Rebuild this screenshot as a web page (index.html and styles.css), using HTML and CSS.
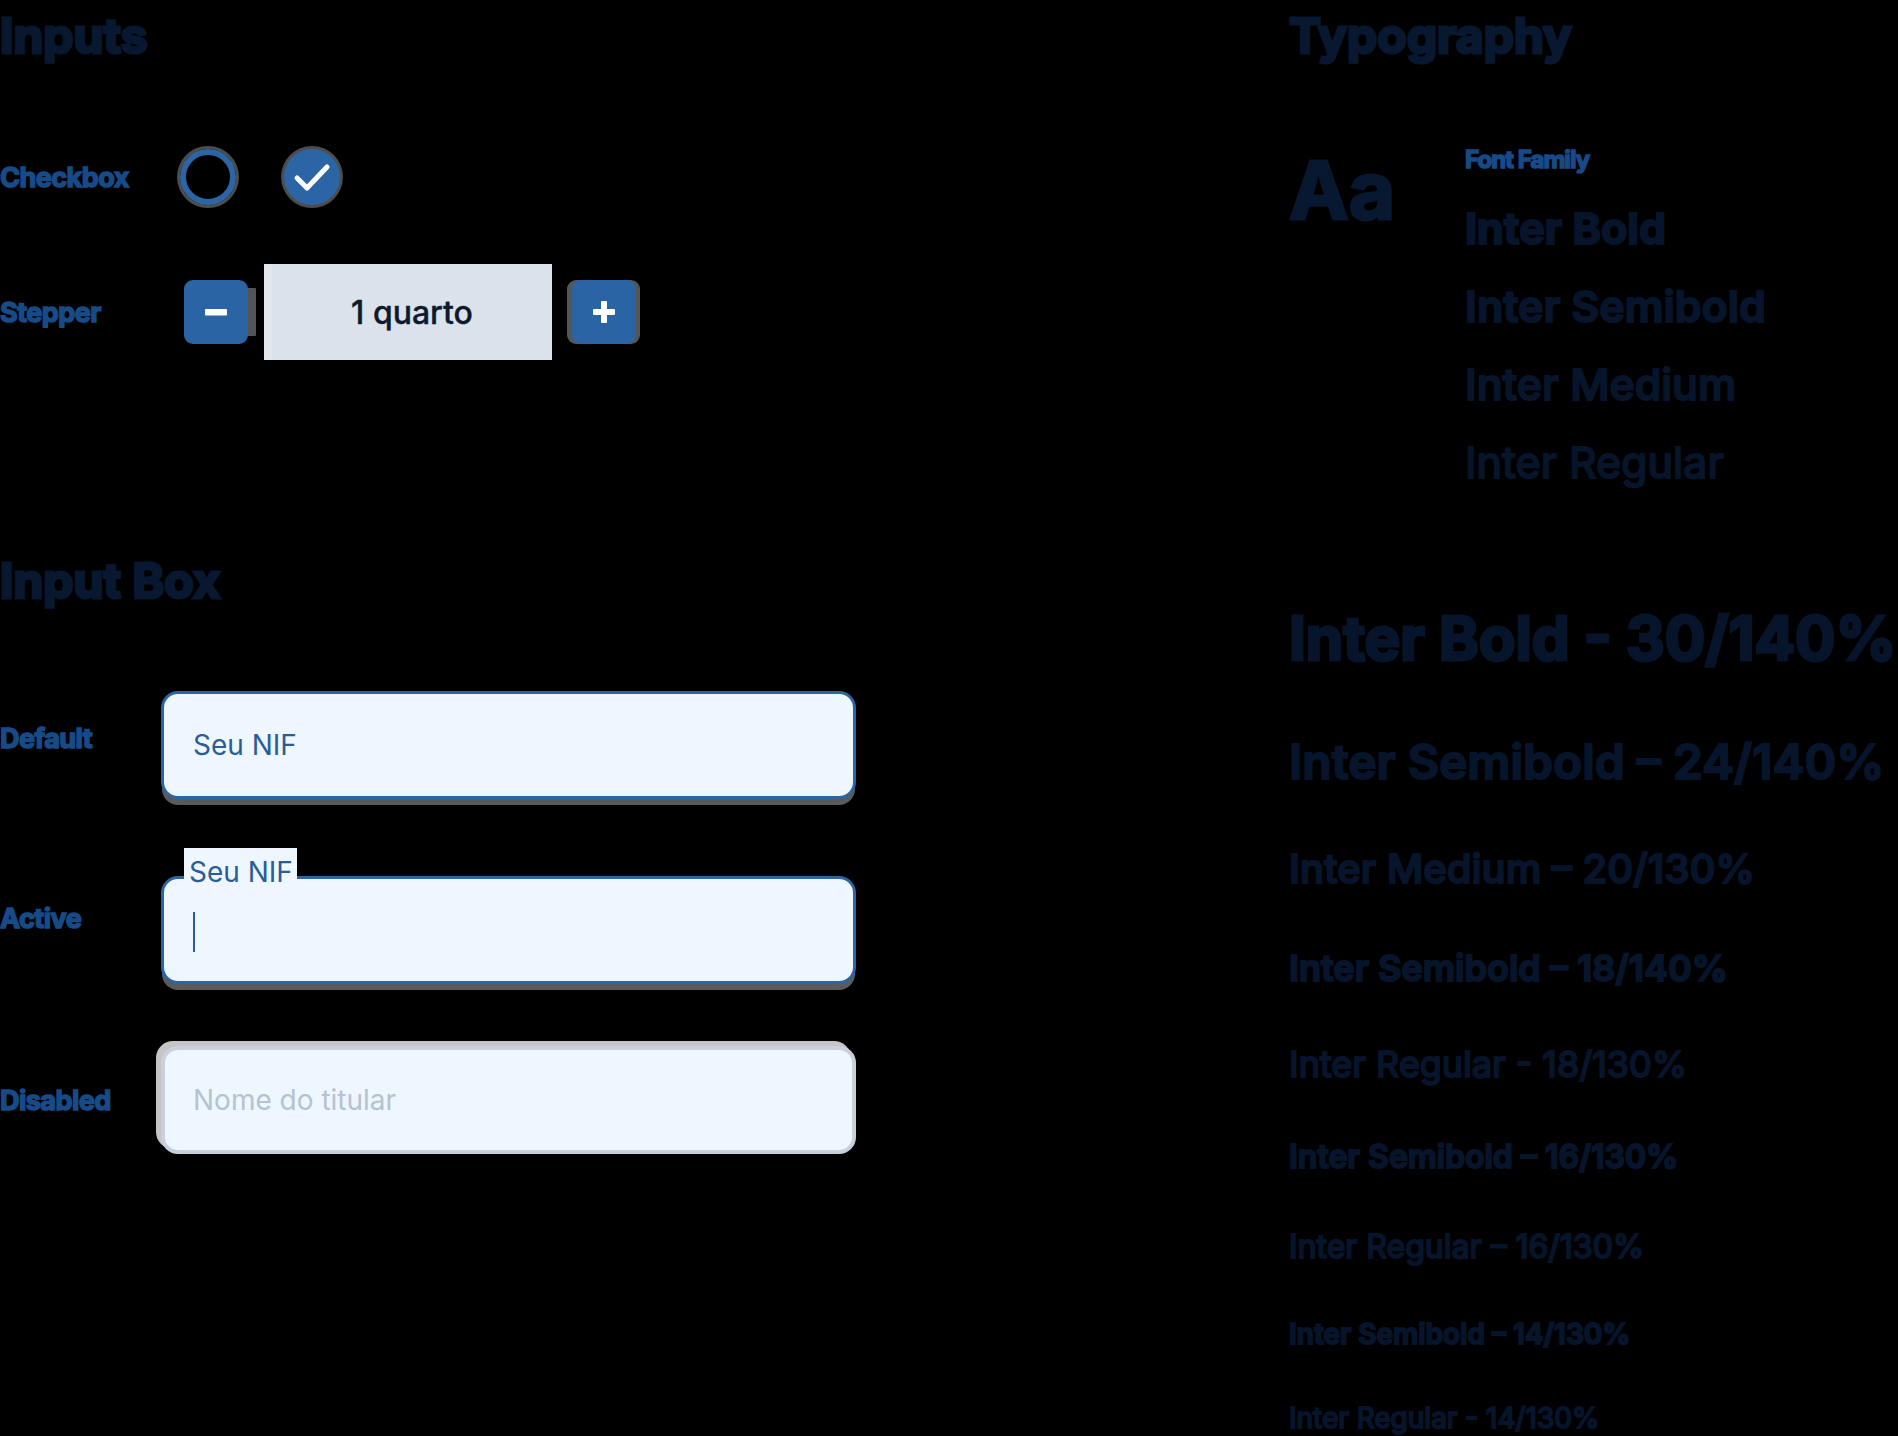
FILE: index.html
```html
<!DOCTYPE html>
<html lang="pt">
<head>
<meta charset="utf-8">
<title>Inputs &amp; Typography</title>
<link rel="stylesheet" href="styles.css">
</head>
<body>
<main class="page">
  <section class="col col-left">
    <h2 class="heading">Inputs</h2>

    <div class="row row-check">
      <span class="label">Checkbox</span>
      <div class="checks">
        <span class="check"></span>
        <span class="check check-on">
          <svg viewBox="0 0 56 56" width="56" height="56" aria-hidden="true"><polyline points="13,29 23,39 43,18" fill="none" stroke="#fff" stroke-width="5" stroke-linecap="round" stroke-linejoin="round"/></svg>
        </span>
      </div>
    </div>

    <div class="row row-stepper">
      <span class="label">Stepper</span>
      <div class="stepper">
        <button class="step-btn step-minus" type="button" aria-label="Diminuir">
          <svg viewBox="0 0 22 22" width="22" height="22" aria-hidden="true"><rect x="0" y="8" width="22" height="6.5" rx="1" fill="#fff"/></svg>
        </button>
        <div class="step-value">1 quarto</div>
        <button class="step-btn step-plus" type="button" aria-label="Aumentar">
          <svg viewBox="0 0 22 22" width="22" height="22" aria-hidden="true"><rect x="0" y="8" width="22" height="6" rx="1" fill="#fff"/><rect x="8" y="0" width="6" height="22" rx="1" fill="#fff"/></svg>
        </button>
      </div>
    </div>

    <h2 class="heading heading-box">Input Box</h2>

    <div class="row row-field row-default">
      <span class="label label-up">Default</span>
      <div class="field">
        <span class="field-text">Seu NIF</span>
      </div>
    </div>

    <div class="row row-field row-active">
      <span class="label label-up2">Active</span>
      <div class="field field-active">
        <span class="float-label">Seu NIF</span>
        <span class="caret"></span>
      </div>
    </div>

    <div class="row row-field row-disabled">
      <span class="label">Disabled</span>
      <div class="field field-disabled">
        <span class="field-text placeholder">Nome do titular</span>
      </div>
    </div>
  </section>

  <section class="col col-right">
    <h2 class="heading">Typography</h2>

    <div class="family">
      <div class="aa">Aa</div>
      <ul class="family-list">
        <li class="family-title">Font Family</li>
        <li class="fam w700">Inter Bold</li>
        <li class="fam w600">Inter Semibold</li>
        <li class="fam w500">Inter Medium</li>
        <li class="fam w400">Inter Regular</li>
      </ul>
    </div>

    <ul class="samples">
      <li class="s s1">Inter Bold - 30/140%</li>
      <li class="s s2">Inter Semibold – 24/140%</li>
      <li class="s s3">Inter Medium – 20/130%</li>
      <li class="s s4">Inter Semibold – 18/140%</li>
      <li class="s s5">Inter Regular - 18/130%</li>
      <li class="s s6">Inter Semibold – 16/130%</li>
      <li class="s s7">Inter Regular – 16/130%</li>
      <li class="s s8">Inter Semibold – 14/130%</li>
      <li class="s s9">Inter Regular - 14/130%</li>
    </ul>
  </section>
</main>
</body>
</html>
```

FILE: styles.css
```css
html, body {
  margin: 0;
  padding: 0;
  background: #000;
}

body {
  font-family: Inter, "Noto Sans", "Liberation Sans", sans-serif;
  color: #06152c;
}

.page {
  display: flex;
  align-items: flex-start;
  width: 1898px;
}

.col-left {
  width: 1289px;
  flex: none;
  display: flex;
  flex-direction: column;
}

.col-right {
  flex: 1;
  display: flex;
  flex-direction: column;
}

.heading {
  margin: 0;
  font-size: 48px;
  font-weight: 700;
  line-height: 72px;
  color: #071830;
  -webkit-text-stroke: 3px #071830;
  letter-spacing: 0;
}

/* ---------- rows ---------- */
.row {
  display: grid;
  grid-template-columns: 161px 1fr;
  align-items: center;
}

.label {
  justify-self: start;
  font-size: 27px;
  font-weight: 700;
  line-height: 1;
  color: #164b88;
  -webkit-text-stroke: 1.5px #164b88;
  letter-spacing: -0.02em;
}

.label-up { transform: translateY(-7px); }
.label-up2 { transform: translateY(-12px); }

.row-check { margin-top: 77px; height: 56px; }
.row-stepper { margin-top: 59px; height: 96px; }
.heading-box { margin-top: 185px; }
.row-default { margin-top: 74px; }
.row-active { margin-top: 77px; }
.row-disabled { margin-top: 62px; }

/* ---------- checkbox ---------- */
.checks {
  display: flex;
  gap: 48px;
  padding-left: 19px;
}

.check {
  box-sizing: border-box;
  width: 56px;
  height: 56px;
  border-radius: 50%;
  border: 6px solid #2b65a5;
  box-shadow: 0 0 0 3px #4d4d4d;
  display: flex;
}

.check-on {
  border: none;
  background: #2b65a5;
}

/* ---------- stepper ---------- */
.stepper {
  display: flex;
  align-items: center;
  padding-left: 23px;
}

.step-btn {
  width: 64px;
  height: 64px;
  padding: 0;
  border: none;
  border-radius: 9px;
  background: #2b64a4;
  display: flex;
  align-items: center;
  justify-content: center;
}

.step-minus {
  box-shadow: 16px 0 0 -8px #555;
}

.step-plus {
  margin-left: 20px;
  box-shadow: -5px 0 0 #555, 4px 0 0 #555;
}

.step-value {
  margin-left: 24px;
  width: 280px;
  height: 96px;
  background: #dbe2ec;
  box-shadow: -8px 0 0 0 #e2e7ee;
  display: flex;
  align-items: center;
  justify-content: center;
  font-size: 32px;
  font-weight: 500;
  color: #0c1a2c;
  -webkit-text-stroke: 0.4px #0c1a2c;
}

/* ---------- input box ---------- */
.field {
  position: relative;
  box-sizing: border-box;
  width: 695px;
  height: 108px;
  border: 3px solid #2b65a4;
  border-radius: 17px;
  background: #eef7ff;
  box-shadow: 0 7px 0 -1px #5a5a5a;
  display: flex;
  align-items: center;
  padding-left: 29px;
}

.field-text {
  font-size: 28px;
  font-weight: 400;
  color: #2a5d97;
}

.float-label {
  position: absolute;
  left: 20px;
  top: -31px;
  padding: 6px 4px 0 5px;
  background: #eef7ff;
  font-size: 28px;
  line-height: 36px;
  color: #2a5d97;
}

.caret {
  width: 2px;
  height: 40px;
  background: #2a5d97;
  margin-top: 4px;
}

.field-disabled {
  border: 4px solid #c7d0dc;
  box-shadow: -5px -5px 0 0 #c5c5c5;
  padding-left: 28px;
}

.placeholder {
  color: #b5c2d2;
}

/* ---------- typography ---------- */
.family {
  display: flex;
  margin-top: 70px;
}

.aa {
  width: 176px;
  flex: none;
  font-size: 80px;
  font-weight: 700;
  line-height: 96px;
  color: #071830;
  -webkit-text-stroke: 3px #071830;
}

.family-list {
  list-style: none;
  margin: 0;
  padding: 0;
  display: flex;
  flex-direction: column;
  gap: 20px;
}

.family-title {
  font-size: 24px;
  font-weight: 700;
  line-height: 34px;
  color: #164b88;
  -webkit-text-stroke: 1.5px #164b88;
  letter-spacing: -0.04em;
  margin-top: 1px;
  margin-bottom: 2px;
}

.fam {
  font-size: 43px;
  line-height: 58px;
  color: #06152c;
  -webkit-text-stroke: 2px #06152c;
}

.w700 { font-weight: 700; }
.w600 { font-weight: 600; }
.w500 { font-weight: 500; }
.w400 { font-weight: 400; }

.samples {
  list-style: none;
  margin: 105px 0 0;
  padding: 0;
  display: flex;
  flex-direction: column;
  gap: 48px;
}

.s {
  color: #06152c;
  -webkit-text-stroke: 2px #06152c;
  white-space: nowrap;
}

.s1 { font-size: 60px; font-weight: 700; line-height: 84px; -webkit-text-stroke-width: 3px; }
.s2 { font-size: 48px; font-weight: 600; line-height: 67px; }
.s3 { font-size: 40px; font-weight: 500; line-height: 52px; }
.s4 { font-size: 36px; font-weight: 600; line-height: 50px; }
.s5 { font-size: 36px; font-weight: 400; line-height: 47px; }
.s6 { font-size: 32px; font-weight: 600; line-height: 42px; }
.s7 { font-size: 32px; font-weight: 400; line-height: 42px; }
.s8 { font-size: 28px; font-weight: 600; line-height: 36px; }
.s9 { font-size: 28px; font-weight: 400; line-height: 36px; }
```
